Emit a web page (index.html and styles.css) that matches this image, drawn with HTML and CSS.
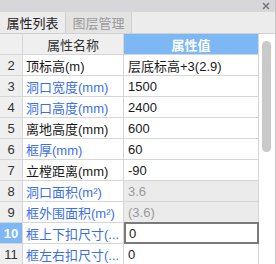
FILE: index.html
```html
<!DOCTYPE html>
<html lang="zh">
<head>
    <meta charset="UTF-8">
    <title>属性列表</title>
    <link rel="stylesheet" href="styles.css">
</head>
<body>
    <div class="panel">
        <div class="titlebar">
            <svg class="close" width="8" height="8" viewBox="0 0 8 8">
                <path d="M1 1L7 7M7 1L1 7" stroke="#7a7a7a" stroke-width="1.6"/>
            </svg>
        </div>
        <div class="tabs">
            <div class="tab active">属性列表</div>
            <div class="tab">图层管理</div>
        </div>
        <div class="body">
            <div class="grid">
                <div class="cell num head"></div>
                <div class="cell head name-head">属性名称</div>
                <div class="cell head value-head">属性值</div>

                <div class="cell num">2</div>
                <div class="cell name">顶标高(m)</div>
                <div class="cell value">层底标高+3(2.9)</div>

                <div class="cell num">3</div>
                <div class="cell name blue">洞口宽度(mm)</div>
                <div class="cell value">1500</div>

                <div class="cell num">4</div>
                <div class="cell name blue">洞口高度(mm)</div>
                <div class="cell value">2400</div>

                <div class="cell num">5</div>
                <div class="cell name">离地高度(mm)</div>
                <div class="cell value">600</div>

                <div class="cell num">6</div>
                <div class="cell name blue">框厚(mm)</div>
                <div class="cell value">60</div>

                <div class="cell num">7</div>
                <div class="cell name">立樘距离(mm)</div>
                <div class="cell value">-90</div>

                <div class="cell num">8</div>
                <div class="cell name blue">洞口面积(m²)</div>
                <div class="cell value readonly">3.6</div>

                <div class="cell num">9</div>
                <div class="cell name blue">框外围面积(m²)</div>
                <div class="cell value readonly">(3.6)</div>

                <div class="cell num selected">10</div>
                <div class="cell name blue">框上下扣尺寸(...</div>
                <div class="cell value editing">0</div>

                <div class="cell num">11</div>
                <div class="cell name blue">框左右扣尺寸(...</div>
                <div class="cell value">0</div>
            </div>
            <div class="scrollbar">
                <div class="thumb"></div>
            </div>
        </div>
    </div>
</body>
</html>
```

FILE: styles.css
```css
body {
    margin: 0;
    padding: 0;
    font-family: "Liberation Sans", "Noto Sans CJK SC", sans-serif;
    font-size: 13px;
    color: #1a1a1a;
    background-color: #ffffff;
}
.panel {
    width: 276px;
    height: 264px;
    overflow: hidden;
    display: flex;
    flex-direction: column;
    box-sizing: border-box;
    border-right: 1px solid #c8c8c8;
}
.titlebar {
    height: 12px;
    flex-shrink: 0;
    background-color: #d6d6db;
    display: flex;
    justify-content: flex-end;
    align-items: center;
    padding-right: 5px;
}
.tabs {
    height: 22px;
    flex-shrink: 0;
    display: flex;
    background-color: #ececec;
    border-bottom: 1px solid #d0d0d0;
    box-sizing: border-box;
}
.tab {
    width: 65px;
    display: flex;
    align-items: center;
    justify-content: center;
    color: #9a9a9a;
    background-color: #e3e3e3;
    border-right: 1px solid #d0d0d0;
}
.tab.active {
    color: #222;
    background-color: #ececec;
}
.body {
    flex-grow: 1;
    display: flex;
    overflow: hidden;
}
.grid {
    width: 259px;
    display: grid;
    grid-template-columns: 23px 101px 135px;
    grid-auto-rows: 21px;
    align-content: start;
}
.cell {
    box-sizing: border-box;
    border-right: 1px solid #d6d6d6;
    border-bottom: 1px solid #d6d6d6;
    display: flex;
    align-items: center;
    white-space: nowrap;
    overflow: hidden;
}
.num {
    justify-content: center;
    background-color: #efefef;
    color: #333;
}
.num.selected {
    background-color: #7db8f5;
    color: #fff;
    font-weight: bold;
}
.head {
    background-color: #efefef;
    justify-content: center;
    color: #333;
}
.value-head {
    background-color: #7db8f5;
    color: #fff;
    font-weight: bold;
}
.name {
    padding-left: 3px;
}
.name.blue {
    color: #3b6fe8;
}
.value {
    padding-left: 4px;
}
.value.readonly {
    background-color: #ebebeb;
    color: #9a9a9a;
}
.value.editing {
    border: 2px solid #7a7a7a;
    margin-top: -1px;
    padding-left: 3px;
}
.scrollbar {
    flex-grow: 1;
    padding: 7px 0 0 3px;
}
.thumb {
    width: 9px;
    height: 111px;
    border-radius: 5px;
    background-color: #c9c9c9;
}
```
